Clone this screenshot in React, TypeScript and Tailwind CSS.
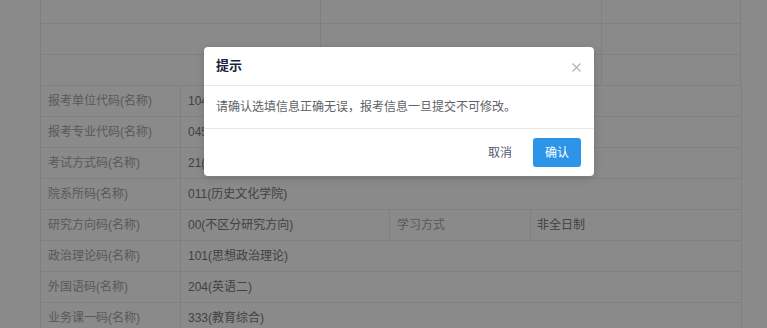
const font = { fontFamily: '"Liberation Sans", "Noto Sans CJK SC", sans-serif' };

type Row = { label: string; value: string; label2?: string; value2?: string };

const rows: Row[] = [
  { label: '报考单位代码(名称)', value: '10475(河南大学)' },
  { label: '报考专业代码(名称)', value: '045109(学科教学（历史）)' },
  { label: '考试方式码(名称)', value: '21(全国统考)', label2: '专项计划', value2: '无' },
  { label: '院系所码(名称)', value: '011(历史文化学院)' },
  { label: '研究方向码(名称)', value: '00(不区分研究方向)', label2: '学习方式', value2: '非全日制' },
  { label: '政治理论码(名称)', value: '101(思想政治理论)' },
  { label: '外国语码(名称)', value: '204(英语二)' },
  { label: '业务课一码(名称)', value: '333(教育综合)' },
];

export default function App() {
  return (
    <div className="relative w-[767px] h-[328px] overflow-hidden bg-white" style={font}>
      {/* page behind the mask */}
      <div className="-mt-[7px] pl-[40px] text-[12px]">
        {/* upper block */}
        <div className="w-[701px] border-l border-[#ececec]">
          <div className="flex h-[31px] border-b border-[#ececec]">
            <div className="w-[280px] border-r border-[#ececec]" />
            <div className="w-[281px] border-r border-[#ececec]" />
            <div className="w-[139px] border-r border-[#ececec]" />
          </div>
          <div className="flex h-[31px] border-b border-[#ececec]">
            <div className="w-[280px] border-r border-[#ececec]" />
            <div className="w-[281px] border-r border-[#ececec]" />
            <div className="w-[139px] border-r border-[#ececec]" />
          </div>
          <div className="flex h-[31px] border-b border-[#ececec]">
            <div className="w-[561px] border-r border-[#ececec]" />
            <div className="w-[139px] border-r border-[#ececec]" />
          </div>
        </div>
        {/* info table */}
        <div className="w-[702px] border-l border-[#ececec]">
          {rows.map((r) => (
            <div key={r.label} className="flex h-[31px] border-b border-[#ececec]">
              <div className="w-[140px] flex items-center px-[7px] text-[#a6a6a6] border-r border-[#ececec]">{r.label}</div>
              {r.label2 ? (
                <>
                  <div className="w-[209px] flex items-center px-[7px] text-[#7a7a7a] border-r border-[#ececec]">{r.value}</div>
                  <div className="w-[141px] flex items-center px-[7px] text-[#a6a6a6] border-r border-[#ececec]">{r.label2}</div>
                  <div className="flex-1 flex items-center px-[6px] text-[#7a7a7a] border-r border-[#ececec]">{r.value2}</div>
                </>
              ) : (
                <div className="flex-1 flex items-center px-[7px] text-[#7a7a7a] border-r border-[#ececec]">{r.value}</div>
              )}
            </div>
          ))}
        </div>
      </div>

      {/* mask */}
      <div className="absolute inset-0 bg-black/[0.46]" />

      {/* message box */}
      <div className="absolute left-[204px] top-[47px] w-[390px] rounded-[4px] bg-white shadow-[0_2px_8px_rgba(0,0,0,0.15)]">
        <div className="flex items-center justify-between h-[39px] pl-[12px] pr-[13px] border-b border-[#e8e8e8]">
          <span className="text-[13px] font-bold text-[#17233d]">提示</span>
          <svg width="9" height="9" viewBox="0 0 9 9" className="mt-[2px]">
            <path d="M0.5 0.5L8.5 8.5M8.5 0.5L0.5 8.5" stroke="#b4b4b4" strokeWidth="1.2" fill="none" />
          </svg>
        </div>
        <div className="h-[43px] flex items-center px-[12px] text-[12px] text-[#606266] border-b border-[#e8e8e8]">
          请确认选填信息正确无误，报考信息一旦提交不可修改。
        </div>
        <div className="flex justify-end gap-[9px] pt-[9px] pb-[9px] pr-[13px]">
          <button className="w-[48px] h-[29px] rounded-[3px] text-[12px] text-[#515a6e]">取消</button>
          <button className="w-[48px] h-[29px] rounded-[3px] text-[12px] text-white bg-[#2d95e9]">确认</button>
        </div>
      </div>
    </div>
  );
}
